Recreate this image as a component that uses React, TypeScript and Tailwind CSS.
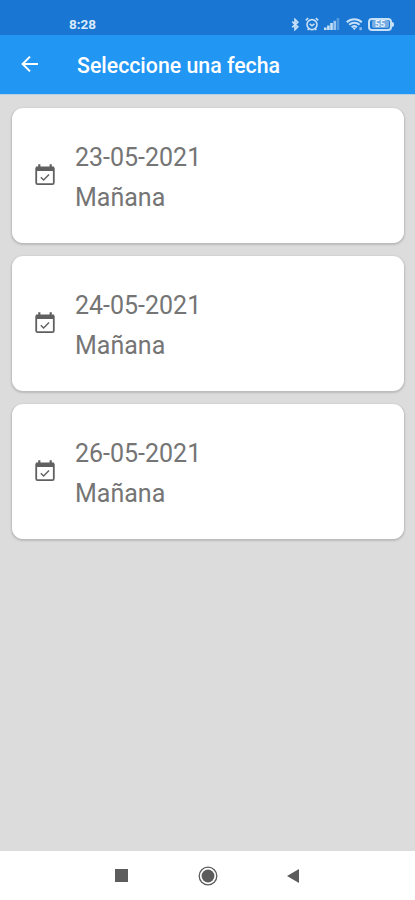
type Slot = {
  date: string;
  label: string;
};

const SLOTS: Slot[] = [
  { date: "23-05-2021", label: "Mañana" },
  { date: "24-05-2021", label: "Mañana" },
  { date: "26-05-2021", label: "Mañana" },
];

function StatusIcons() {
  return (
    <div className="flex items-center text-[#c6e0f8]">
      <svg className="mr-[6px] h-[13px] w-[8px]" viewBox="0 0 8 14" fill="none" stroke="currentColor" strokeWidth="1.8">
        <path d="M1 4 7 9.5 4 12.5V1.5L7 4.5 1 10" />
      </svg>
      <svg className="mr-[5px] h-[14px] w-[14px]" viewBox="0 0 14 14" fill="none" stroke="currentColor" strokeWidth="1.6">
        <circle cx="7" cy="7.6" r="5" />
        <path d="M.8 3.4 3.2 1.2M13.2 3.4 10.8 1.2M2.7 12.9l1-1.2M11.3 12.9l-1-1.2M4.7 6.8 7 8.8l2.4-2" />
      </svg>
      <svg className="mr-[6px] h-[12px] w-[16px]" viewBox="0 0 16 12" fill="currentColor">
        <rect x="0" y="9.5" width="2.6" height="2.5" />
        <rect x="3.1" y="7.5" width="2.6" height="4.5" />
        <rect x="6.2" y="5" width="2.6" height="7" />
        <rect x="9.4" y="2.8" width="2.6" height="9.2" opacity=".75" />
        <rect x="12.6" y="0" width="2.6" height="12" opacity=".35" />
      </svg>
      <svg className="mr-[5px] h-[13px] w-[17px]" viewBox="0 0 17 13" fill="none" stroke="currentColor" strokeWidth="2">
        <path d="M.8 4.3c4.2-4 10.8-4 15 0M3.2 6.8c3-2.9 7.4-2.9 10.4 0M5.6 9.2c1.7-1.5 3.8-1.5 5.4 0" />
        <path d="m6.3 9.6 2 2.6 2-2.6Z" fill="currentColor" stroke="none" />
        <path d="M13.4 9.3h2.4v2.8h-2.4z" fill="currentColor" stroke="none" opacity=".7" />
      </svg>
      <div className="flex items-center">
        <div className="flex h-[13px] w-[24px] items-center justify-center rounded-[4px] border-2 border-[#c6e0f8]">
          <span className="flex h-[8px] w-[17px] items-center justify-center rounded-[2px] bg-[#78ade3] text-[9px] leading-none font-bold text-[#e8f4ff]">
            55
          </span>
        </div>
        <span className="h-[5px] w-[2px] rounded-r-sm bg-[#c6e0f8]" />
      </div>
    </div>
  );
}

function CalendarCheck() {
  return (
    <svg className="mb-px h-[22px] w-[20px] shrink-0" viewBox="0 0 20 22" fill="none" stroke="#606060">
      <path d="M1.2 4.2h17.6v14.6q0 1.4-1.4 1.4H2.6q-1.4 0-1.4-1.4Z" strokeWidth="1.8" strokeLinejoin="round" />
      <path d="M1 2.4h18V7H1zM3.2.2h2.2v3H3.2zM14.6.2h2.2v3h-2.2z" fill="#606060" stroke="none" />
      <path d="m5.8 13.2 2.8 2.8 5.4-5.4" strokeWidth="1.4" />
    </svg>
  );
}

function SlotCard({ date, label }: Slot) {
  return (
    <li className="flex h-[135px] items-center rounded-[11px] bg-white pl-[23px] shadow-[0_1px_2px_1px_rgba(0,0,0,0.15)]">
      <CalendarCheck />
      <div className="ml-[20px] pt-[5px] text-[25px] leading-[40px] text-[#757575]">
        <p>{date}</p>
        <p>{label}</p>
      </div>
    </li>
  );
}

export default function App() {
  return (
    <div className="flex h-[900px] w-full flex-col overflow-hidden bg-[#dcdcdc] font-[Roboto,sans-serif]">
      <div className="flex h-[35px] shrink-0 items-end justify-between bg-[#1976d2] pr-[21px] pb-[4px] pl-[69px]">
        <span className="text-[13.5px] leading-[13px] font-bold text-[#d8eafb]">8:28</span>
        <StatusIcons />
      </div>

      <header className="flex h-[59px] shrink-0 items-center bg-[#2196f3] pl-[21px] text-white">
        <svg className="mb-[2px] h-[18px] w-[18px]" viewBox="0 0 18 18" fill="none" stroke="currentColor" strokeWidth="2">
          <path d="M17 9H2M9 1.6 1.6 9 9 16.4" />
        </svg>
        <h1 className="ml-[38px] pt-[3px] text-[21.3px] leading-6 font-medium">Seleccione una fecha</h1>
      </header>

      <ul className="flex flex-1 flex-col gap-[13px] border-t border-[#b5cfe3] pt-[13px] pr-[11px] pl-[12px]">
        {SLOTS.map((slot) => (
          <SlotCard key={slot.date} {...slot} />
        ))}
      </ul>

      <nav className="flex h-[49px] shrink-0 items-center justify-between bg-white pr-[116px] pl-[115px] text-[#5c5c5c]">
        <span className="h-[13px] w-[13px] bg-current" />
        <svg className="h-[20px] w-[20px]" viewBox="0 0 20 20" fill="currentColor">
          <circle cx="10" cy="10" r="8.8" fill="none" stroke="currentColor" strokeWidth="1.3" />
          <circle cx="10" cy="10" r="6.4" />
        </svg>
        <svg className="h-[14px] w-[12px]" viewBox="0 0 12 14" fill="currentColor">
          <path d="M12 0v14L0 7Z" />
        </svg>
      </nav>
    </div>
  );
}
